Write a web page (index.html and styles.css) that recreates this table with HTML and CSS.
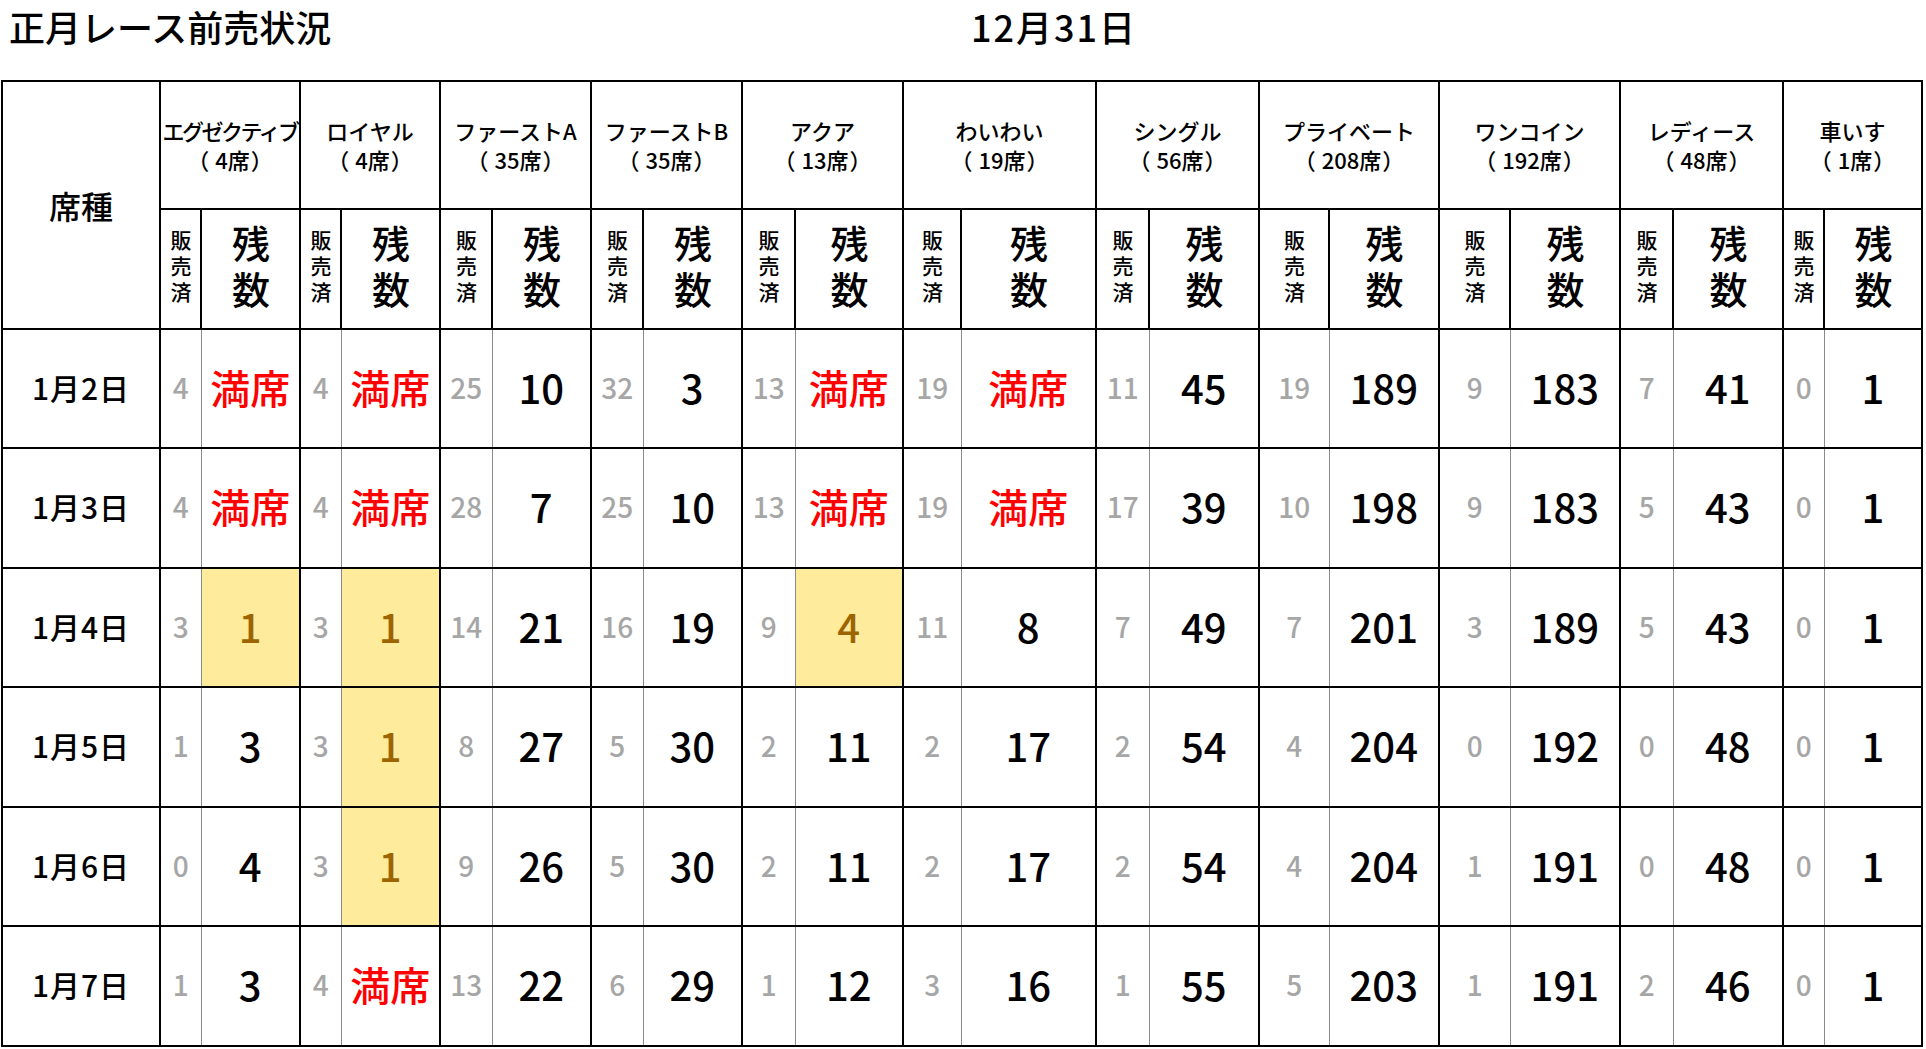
FILE: index.html
```html
<!DOCTYPE html>
<html lang="ja">
<head>
<meta charset="utf-8">
<title>正月レース前売状況</title>
<link rel="stylesheet" href="styles.css">
</head>
<body>
<div class="page">
  <div class="top">
    <div class="title">正月レース前売状況</div>
    <div class="day">12月31日</div>
  </div>
  <table class="sheet">
    <colgroup>
      <col class="c-date">
      <col class="w41"><col class="w99">
      <col class="w41"><col class="w99">
      <col class="w52"><col class="w99">
      <col class="w52"><col class="w99">
      <col class="w53"><col class="w108">
      <col class="w58"><col class="w135">
      <col class="w53"><col class="w110">
      <col class="w70"><col class="w110">
      <col class="w71"><col class="w110">
      <col class="w53"><col class="w110">
      <col class="w41"><col class="w98">
    </colgroup>
    <thead>
      <tr class="h1">
        <th rowspan="2" class="kind">席種</th>
        <th colspan="2" class="grp"><span class="tight">エグゼクティブ</span><br><span class="op">（</span>4席<span class="cp">）</span></th>
        <th colspan="2" class="grp">ロイヤル<br><span class="op">（</span>4席<span class="cp">）</span></th>
        <th colspan="2" class="grp">ファーストA<br><span class="op">（</span>35席<span class="cp">）</span></th>
        <th colspan="2" class="grp">ファーストB<br><span class="op">（</span>35席<span class="cp">）</span></th>
        <th colspan="2" class="grp">アクア<br><span class="op">（</span>13席<span class="cp">）</span></th>
        <th colspan="2" class="grp">わいわい<br><span class="op">（</span>19席<span class="cp">）</span></th>
        <th colspan="2" class="grp">シングル<br><span class="op">（</span>56席<span class="cp">）</span></th>
        <th colspan="2" class="grp">プライベート<br><span class="op">（</span>208席<span class="cp">）</span></th>
        <th colspan="2" class="grp">ワンコイン<br><span class="op">（</span>192席<span class="cp">）</span></th>
        <th colspan="2" class="grp">レディース<br><span class="op">（</span>48席<span class="cp">）</span></th>
        <th colspan="2" class="grp">車いす<br><span class="op">（</span>1席<span class="cp">）</span></th>
      </tr>
      <tr class="h2">
        <th class="sh"><span class="vt vt-s">販売済</span></th><th class="rh"><span class="vt vt-r">残数</span></th>
        <th class="sh"><span class="vt vt-s">販売済</span></th><th class="rh"><span class="vt vt-r">残数</span></th>
        <th class="sh"><span class="vt vt-s">販売済</span></th><th class="rh"><span class="vt vt-r">残数</span></th>
        <th class="sh"><span class="vt vt-s">販売済</span></th><th class="rh"><span class="vt vt-r">残数</span></th>
        <th class="sh"><span class="vt vt-s">販売済</span></th><th class="rh"><span class="vt vt-r">残数</span></th>
        <th class="sh"><span class="vt vt-s">販売済</span></th><th class="rh"><span class="vt vt-r">残数</span></th>
        <th class="sh"><span class="vt vt-s">販売済</span></th><th class="rh"><span class="vt vt-r">残数</span></th>
        <th class="sh"><span class="vt vt-s">販売済</span></th><th class="rh"><span class="vt vt-r">残数</span></th>
        <th class="sh"><span class="vt vt-s">販売済</span></th><th class="rh"><span class="vt vt-r">残数</span></th>
        <th class="sh"><span class="vt vt-s">販売済</span></th><th class="rh"><span class="vt vt-r">残数</span></th>
        <th class="sh"><span class="vt vt-s">販売済</span></th><th class="rh"><span class="vt vt-r">残数</span></th>
      </tr>
    </thead>
    <tbody>
      <tr class="ra">
        <td class="date">1月2日</td>
        <td class="s">4</td><td class="r full">満席</td>
        <td class="s">4</td><td class="r full">満席</td>
        <td class="s">25</td><td class="r">10</td>
        <td class="s">32</td><td class="r">3</td>
        <td class="s">13</td><td class="r full">満席</td>
        <td class="s">19</td><td class="r full">満席</td>
        <td class="s">11</td><td class="r">45</td>
        <td class="s">19</td><td class="r">189</td>
        <td class="s">9</td><td class="r">183</td>
        <td class="s">7</td><td class="r">41</td>
        <td class="s">0</td><td class="r">1</td>
      </tr>
      <tr class="rb">
        <td class="date">1月3日</td>
        <td class="s">4</td><td class="r full">満席</td>
        <td class="s">4</td><td class="r full">満席</td>
        <td class="s">28</td><td class="r">7</td>
        <td class="s">25</td><td class="r">10</td>
        <td class="s">13</td><td class="r full">満席</td>
        <td class="s">19</td><td class="r full">満席</td>
        <td class="s">17</td><td class="r">39</td>
        <td class="s">10</td><td class="r">198</td>
        <td class="s">9</td><td class="r">183</td>
        <td class="s">5</td><td class="r">43</td>
        <td class="s">0</td><td class="r">1</td>
      </tr>
      <tr class="ra">
        <td class="date">1月4日</td>
        <td class="s">3</td><td class="r neutral">1</td>
        <td class="s">3</td><td class="r neutral">1</td>
        <td class="s">14</td><td class="r">21</td>
        <td class="s">16</td><td class="r">19</td>
        <td class="s">9</td><td class="r neutral">4</td>
        <td class="s">11</td><td class="r">8</td>
        <td class="s">7</td><td class="r">49</td>
        <td class="s">7</td><td class="r">201</td>
        <td class="s">3</td><td class="r">189</td>
        <td class="s">5</td><td class="r">43</td>
        <td class="s">0</td><td class="r">1</td>
      </tr>
      <tr class="rb">
        <td class="date">1月5日</td>
        <td class="s">1</td><td class="r">3</td>
        <td class="s">3</td><td class="r neutral">1</td>
        <td class="s">8</td><td class="r">27</td>
        <td class="s">5</td><td class="r">30</td>
        <td class="s">2</td><td class="r">11</td>
        <td class="s">2</td><td class="r">17</td>
        <td class="s">2</td><td class="r">54</td>
        <td class="s">4</td><td class="r">204</td>
        <td class="s">0</td><td class="r">192</td>
        <td class="s">0</td><td class="r">48</td>
        <td class="s">0</td><td class="r">1</td>
      </tr>
      <tr class="ra">
        <td class="date">1月6日</td>
        <td class="s">0</td><td class="r">4</td>
        <td class="s">3</td><td class="r neutral">1</td>
        <td class="s">9</td><td class="r">26</td>
        <td class="s">5</td><td class="r">30</td>
        <td class="s">2</td><td class="r">11</td>
        <td class="s">2</td><td class="r">17</td>
        <td class="s">2</td><td class="r">54</td>
        <td class="s">4</td><td class="r">204</td>
        <td class="s">1</td><td class="r">191</td>
        <td class="s">0</td><td class="r">48</td>
        <td class="s">0</td><td class="r">1</td>
      </tr>
      <tr class="rb">
        <td class="date">1月7日</td>
        <td class="s">1</td><td class="r">3</td>
        <td class="s">4</td><td class="r full">満席</td>
        <td class="s">13</td><td class="r">22</td>
        <td class="s">6</td><td class="r">29</td>
        <td class="s">1</td><td class="r">12</td>
        <td class="s">3</td><td class="r">16</td>
        <td class="s">1</td><td class="r">55</td>
        <td class="s">5</td><td class="r">203</td>
        <td class="s">1</td><td class="r">191</td>
        <td class="s">2</td><td class="r">46</td>
        <td class="s">0</td><td class="r">1</td>
      </tr>
    </tbody>
  </table>
</div>
</body>
</html>
```

FILE: styles.css
```css
html, body {
  margin: 0;
  padding: 0;
  background: #ffffff;
}

body {
  font-family: "Noto Sans CJK JP", "Noto Sans", sans-serif;
  font-weight: 500;
  color: #000000;
}

.page {
  padding-left: 1px;
}

.top {
  display: flex;
  align-items: flex-start;
  height: 80px;
  padding-left: 8px;
}

.title {
  width: 962px;
  font-size: 36px;
  line-height: 52px;
}

.day {
  font-size: 36px;
  line-height: 52px;
  letter-spacing: 2px;
}

.sheet {
  border-collapse: collapse;
  table-layout: fixed;
  width: 1922px;
  border: 2px solid #000;
}

.sheet th,
.sheet td {
  border: 2px solid #000;
  padding: 0;
  text-align: center;
  vertical-align: middle;
  font-weight: 500;
  white-space: nowrap;
}

.c-date { width: 158px; }
.w41 { width: 41px; }
.w52 { width: 52px; }
.w53 { width: 53px; }
.w58 { width: 58px; }
.w70 { width: 70px; }
.w71 { width: 71px; }
.w98 { width: 98px; }
.w99 { width: 99px; }
.w108 { width: 108px; }
.w110 { width: 110px; }
.w135 { width: 135px; }

.h1 { height: 128px; }
.h2 { height: 120px; }
.ra { height: 119px; }
.rb { height: 120px; }

.kind {
  font-size: 32px;
  line-height: 40px;
}

.grp {
  font-size: 22px;
  line-height: 29px;
}

.tight {
  letter-spacing: -2.5px;
}

.op {
  margin-right: 6px;
}

.cp {
  margin-left: 1px;
}

.vt {
  display: inline-block;
  writing-mode: vertical-rl;
  text-orientation: upright;
  line-height: 1.1;
}

.vt-s {
  font-size: 21px;
  letter-spacing: 5px;
  margin-bottom: -5px;
}

.vt-r {
  font-size: 38px;
  letter-spacing: 8px;
  margin-bottom: -8px;
}

.sheet td {
  line-height: 1;
  padding-bottom: 4px;
}

.date {
  font-size: 30px;
  letter-spacing: 1px;
}

.sheet td.s {
  font-size: 28px;
  color: #a6a6a6;
  border-right: 1px solid #8a8a8a;
}

.sheet td.r {
  font-size: 40px;
  border-left: 1px solid #8a8a8a;
}

.sheet td.full {
  color: #ff0000;
}

.sheet td.neutral {
  background: #ffeb9c;
  color: #9c6500;
}
```
